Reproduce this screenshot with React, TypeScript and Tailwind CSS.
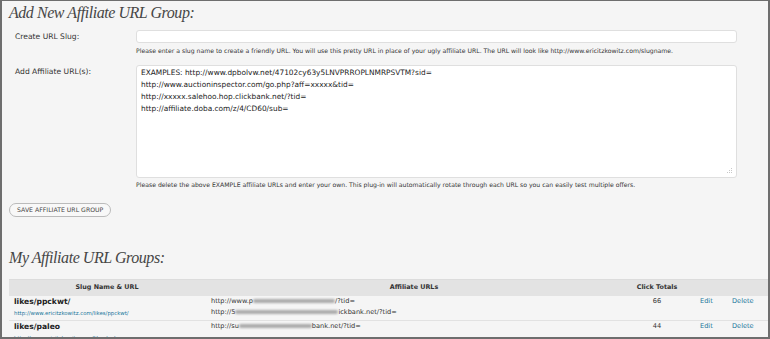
import React from 'react';

const verdana = { fontFamily: '"DejaVu Sans", Verdana, sans-serif' };

const Smudge = ({ w }: { w: number }) => (
  <span
    className="inline-block h-[4px] align-middle bg-[#aaa] blur-[1.2px] rounded-full"
    style={{ width: w }}
  />
);

export default function App() {
  return (
    <div
      className="w-[770px] h-[339px] overflow-hidden bg-[#f5f5f5] border-t border-l-2 border-r-2 border-b-2 border-[#6e6e6e] text-[#333]"
      style={verdana}
    >
      {/* Add new group */}
      <h2 className="pl-[7px] pt-[2px] text-[16px] leading-[20px] tracking-[-0.45px] italic text-[#464646] font-['Liberation_Serif',serif]">
        Add New Affiliate URL Group:
      </h2>

      <div className="mt-[7px] flex">
        <label className="w-[134px] shrink-0 pl-[13px] pt-[1px] text-[7.6px] leading-[12px]">Create URL Slug:</label>
        <div className="w-[601px]">
          <div className="h-[13px] bg-white border border-[#dfdfdf] rounded-[3px]" />
          <p className="mt-[3px] text-[6.15px] leading-[9px]">
            Please enter a slug name to create a friendly URL. You will use this pretty URL in place of your ugly affiliate URL. The URL will look like http://www.ericitzkowitz.com/slugname.
          </p>
        </div>
      </div>

      <div className="mt-[10px] flex">
        <label className="w-[134px] shrink-0 pl-[13px] pt-[1px] text-[7.6px] leading-[12px]">Add Affiliate URL(s):</label>
        <div className="w-[601px]">
          <div className="relative h-[113px] bg-white border border-[#dfdfdf] rounded-[3px] px-[4px] pt-[1px] text-[7.4px] leading-[12px] text-[#222]">
            <div>EXAMPLES: http://www.dpbolvw.net/47102cy63y5LNVPRROPLNMRPSVTM?sid=</div>
            <div>http://www.auctioninspector.com/go.php?aff=xxxxx&amp;tid=</div>
            <div>http://xxxxx.salehoo.hop.clickbank.net/?tid=</div>
            <div>http://affiliate.doba.com/z/4/CD60/sub=</div>
            <svg className="absolute right-[3px] bottom-[3px]" width="6" height="6" viewBox="0 0 6 6">
              <g fill="#c8c8c8">
                <rect x="4" y="0" width="1" height="1" />
                <rect x="2" y="2" width="1" height="1" />
                <rect x="4" y="2" width="1" height="1" />
                <rect x="0" y="4" width="1" height="1" />
                <rect x="2" y="4" width="1" height="1" />
                <rect x="4" y="4" width="1" height="1" />
              </g>
            </svg>
          </div>
          <p className="mt-[2px] text-[6.15px] leading-[9px]">
            Please delete the above EXAMPLE affiliate URLs and enter your own. This plug-in will automatically rotate through each URL so you can easily test multiple offers.
          </p>
        </div>
      </div>

      <div className="mt-[14px] pl-[7px] flex">
        <button className="h-[14px] px-[7px] rounded-full border border-[#bbb] bg-[#f8f8f8] text-[6.2px] leading-[12px] text-[#464646] uppercase">
          Save Affiliate URL Group
        </button>
      </div>

      {/* Existing groups */}
      <h2 className="mt-[31px] pl-[7px] text-[16px] leading-[20px] tracking-[-0.45px] italic text-[#464646] font-['Liberation_Serif',serif]">
        My Affiliate URL Groups:
      </h2>

      <div className="mt-[11px] pl-[7px] flex">
        <table className="w-[759px] table-fixed border-collapse text-[6.6px]">
          <colgroup>
            <col className="w-[196px]" />
            <col className="w-[418px]" />
            <col className="w-[68px]" />
            <col className="w-[35px]" />
            <col className="w-[42px]" />
          </colgroup>
          <thead>
            <tr className="h-[16px] bg-[#e3e3e3] border-t border-[#dcdcdc]">
              <th className="font-bold text-center text-[6.4px]">Slug Name &amp; URL</th>
              <th className="font-bold text-center text-[6.4px]">Affiliate URLs</th>
              <th className="font-bold text-center text-[6.4px]">Click Totals</th>
              <th />
              <th />
            </tr>
          </thead>
          <tbody>
            <tr className="h-[25px] border-b border-[#e2e2e2] align-top">
              <td className="pl-[5px]">
                <div className="font-bold text-[7.6px] leading-[11px] text-[#222]">likes/ppckwt/</div>
                <div className="text-[5.4px] leading-[12px] text-[#21759b]">http://www.ericitzkowitz.com/likes/ppckwt/</div>
              </td>
              <td className="pl-[6px] leading-[11.5px]">
                <div>http://www.p<Smudge w={82} />/?tid=</div>
                <div>http://5<Smudge w={103} />ickbank.net/?tid=</div>
              </td>
              <td className="text-center leading-[11px]">66</td>
              <td className="pl-[9px] leading-[11px] text-[#21759b]">Edit</td>
              <td className="pl-[6px] leading-[11px] text-[#21759b]">Delete</td>
            </tr>
            <tr className="h-[25px] align-top">
              <td className="pl-[5px]">
                <div className="font-bold text-[7.6px] leading-[11px] text-[#222]">likes/paleo</div>
                <div className="text-[5.4px] leading-[12px] text-[#21759b]">http://www.ericitzkowitz.com/likes/paleo</div>
              </td>
              <td className="pl-[6px] leading-[11px]">
                <div>http://su<Smudge w={73} />bank.net/?tid=</div>
              </td>
              <td className="text-center leading-[11px]">44</td>
              <td className="pl-[9px] leading-[11px] text-[#21759b]">Edit</td>
              <td className="pl-[6px] leading-[11px] text-[#21759b]">Delete</td>
            </tr>
          </tbody>
        </table>
      </div>
    </div>
  );
}
